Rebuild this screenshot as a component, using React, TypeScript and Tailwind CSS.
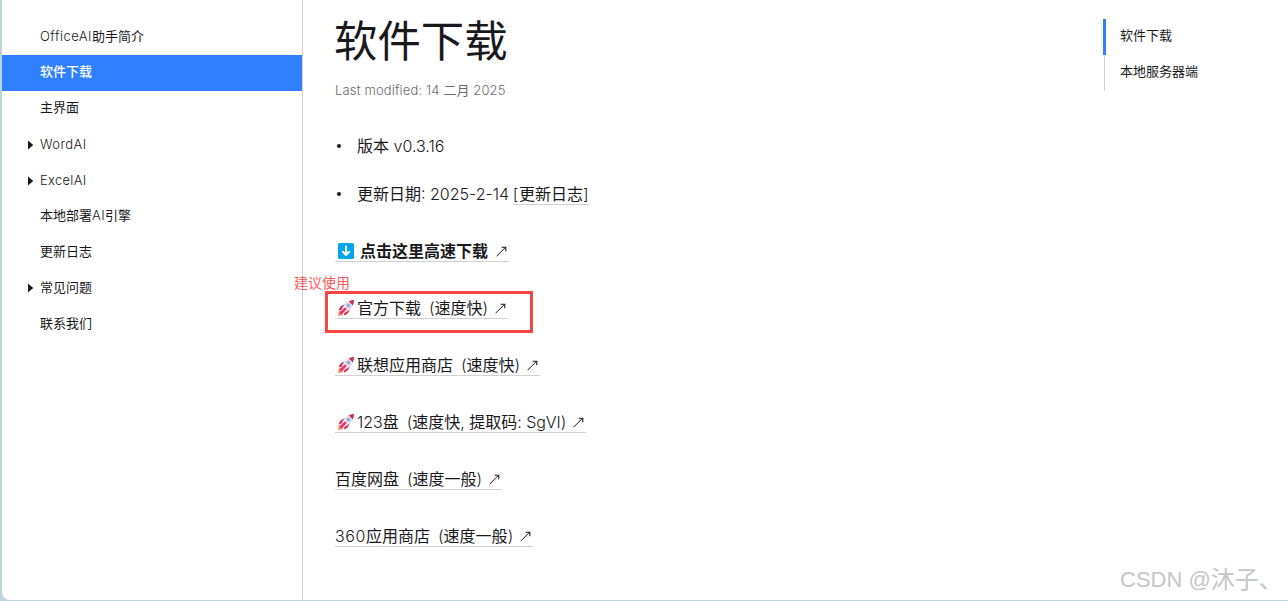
import { clsx } from 'clsx'

type NavItem = { label: string; active?: boolean; nested?: boolean; className?: string }
type Download = { label: string; note: string; rocket?: boolean; className?: string; noteClass?: string }

const navItems: NavItem[] = [
  { label: 'OfficeAI助手简介', className: 'tracking-[0.5px]' },
  { label: '软件下载', active: true, className: 'pb-0.5' },
  { label: '主界面', className: 'pb-0.5' },
  { label: 'WordAI', nested: true, className: 'tracking-[0.4px]' },
  { label: 'ExcelAI', nested: true, className: 'tracking-[0.3px]' },
  { label: '本地部署AI引擎', className: 'pb-0.5 tracking-[0.4px]' },
  { label: '更新日志', className: 'pb-0.5' },
  { label: '常见问题', nested: true, className: 'pb-0.5' },
  { label: '联系我们', className: 'pb-0.5' },
]

const downloads: Download[] = [
  { label: '官方下载', note: '(速度快)', rocket: true },
  { label: '联想应用商店', note: '(速度快)', rocket: true },
  { label: '123盘', note: '(速度快, 提取码: SgVI)', rocket: true, noteClass: 'tracking-[-0.06px]' },
  { label: '百度网盘', note: '(速度一般)' },
  { label: '360应用商店', note: '(速度一般)', className: 'tracking-[0.6px]', noteClass: 'tracking-normal' },
]

// Latin runs are set lighter than the Chinese text around them
function Mixed({ text, latin }: { text: string; latin?: string }) {
  return (
    <span className="whitespace-pre">
      {text.split(/([\x20-\x7e]+)/).map((part, i) =>
        i % 2 ? (
          <span key={i} className={clsx('font-light', latin)}>
            {part}
          </span>
        ) : (
          <span key={i} className="tracking-normal">
            {part}
          </span>
        ),
      )}
    </span>
  )
}

function Rocket() {
  return (
    <svg width="18" height="18" viewBox="0 0 18 18" className="mt-px ml-0.5 mr-0.5 shrink-0">
      <path d="M1 17 L1.8 12.4 L3.6 11.8 L6.2 14.6 L5.4 16.2 Z" fill="#ff8257" />
      <path d="M8 5.6 C5 5.8 3 7.5 1.6 11.4 L5.5 10.4 Z M12.6 10 C12.4 13 10.6 15.2 6.8 16.6 L7.8 12.5 Z" fill="#d2264f" />
      <path d="M4.4 11.2 C6 6 10 1.8 17 1 C16.4 7.8 12.2 12 7 14 Z" fill="#efeaf5" stroke="#b9a9c2" strokeWidth=".4" />
      <path d="M11.8 2.4 C13.4 1.5 15.2 1.1 17 1 C16.9 2.9 16.5 4.6 15.7 6.2 Z" fill="#d2264f" />
      <path d="M4.2 13.8 L8.2 9.9" stroke="#f0325f" strokeWidth="2.6" strokeLinecap="round" />
      <circle cx="11.4" cy="6.6" r="1.7" fill="#7cbcec" stroke="#9c90b0" strokeWidth=".6" />
    </svg>
  )
}

function DownBadge() {
  return (
    <svg width="16" height="16" viewBox="0 0 16 16" className="mt-px ml-[3px] mr-1.5 shrink-0">
      <rect width="16" height="16" rx="1.5" fill="#00a6ed" />
      <path d="M8 3.5 V11" fill="none" stroke="#fff" strokeWidth="2" strokeLinecap="round" />
      <path d="M4.8 8.8 L8 12 L11.2 8.8" fill="none" stroke="#fff" strokeWidth="2" strokeLinecap="round" strokeLinejoin="round" />
    </svg>
  )
}

function External() {
  return (
    <svg width="11" height="11" viewBox="0 0 11 11" className="mt-px ml-[7px] mr-0.5 shrink-0">
      <path d="M.6 10.2 L9.4 1.4" fill="none" stroke="#19191c" strokeWidth="1" />
      <path d="M5.6 1.2 H9.8 V5.2" fill="none" stroke="#19191c" strokeWidth="1.1" />
    </svg>
  )
}

function Sidebar() {
  return (
    <nav className="w-[301px] shrink-0 border-r border-[#d1d1d2] pt-[19px] text-[13px]">
      {navItems.map((item) => (
        <a
          key={item.label}
          className={clsx(
            'flex h-9 items-center pl-[26px]',
            item.active && 'bg-[#307fff] font-medium text-white',
            item.className,
          )}
        >
          <span className="w-3">
            {item.nested && (
              <svg width="6" height="10" viewBox="0 0 6 10">
                <path d="M0 .5 L5.2 5 L0 9.5 Z" fill="#19191c" />
              </svg>
            )}
          </span>
          <Mixed text={item.label} />
        </a>
      ))}
    </nav>
  )
}

function Outline() {
  return (
    <aside className="mt-[19px] mr-[42px] w-[143px] shrink-0 text-[13px]">
      <a className="flex h-9 items-center border-l-[3px] border-[#307fff] pb-0.5 pl-3.5">软件下载</a>
      <a className="ml-px flex h-9 items-center border-l border-[#d1d1d2] pb-0.5 pl-[15px]">本地服务器端</a>
    </aside>
  )
}

export default function App() {
  return (
    <div className="h-[601px] bg-[#bdd4db] pb-px pl-0.5 font-['Inter','Noto_Sans_CJK_SC',sans-serif] font-normal text-[#19191c]">
      <div className="relative flex h-[600px] overflow-hidden rounded-bl-lg bg-white">
        <Sidebar />

        <main className="flex-1 pl-8">
          <h1 className="-ml-px mt-[9px] h-[65px] text-[43.4px] leading-[64px]">软件下载</h1>
          <p className="mt-[6px] h-5 text-[13px] leading-5 tracking-[0.15px] text-[#6b6b6e]">
            <Mixed text="Last modified: 14 二月 2025" />
          </p>

          <ul className="mt-[34px] flex flex-col gap-6 text-[16px] leading-6">
            <li className="flex h-6 items-center">
              <span className="mr-4 ml-0.5 size-1 rounded-full bg-[#19191c]" />
              <Mixed text="版本 v0.3.16" />
            </li>
            <li className="flex h-6 items-center">
              <span className="mr-4 ml-0.5 size-1 rounded-full bg-[#19191c]" />
              <Mixed text="更新日期: 2025-2-14 " />
              <a className="-ml-px flex h-[22px] border-b border-[#d1d1d2] leading-[22px] tracking-[0.8px]">
                <Mixed text="[更新日志]" />
              </a>
            </li>
          </ul>

          <div className="mt-[34px] flex flex-col items-start gap-[35px] text-[16px] leading-[21px] whitespace-nowrap">
            <a className="flex h-[22px] items-center border-b border-[#d1d1d2] font-bold">
              <DownBadge />
              <span className="pt-0.5 pr-px">点击这里高速下载</span>
              <External />
            </a>
            {downloads.map((d) => (
              <a key={d.label} className={clsx('flex h-[22px] items-center border-b border-[#d1d1d2]', d.className)}>
                {d.rocket && <Rocket />}
                <span className="pt-0.5">
                  <Mixed text={d.label} />
                </span>
                <span className={clsx('ml-2 pt-0.5', d.noteClass)}>
                  <Mixed text={d.note} />
                </span>
                <External />
              </a>
            ))}
          </div>
        </main>

        <Outline />

        {/* hand-drawn annotation over the page */}
        <span className="absolute top-[273px] left-[292px] text-[14px] leading-5 text-[#ff5a5a]">建议使用</span>
        <div className="absolute top-[291px] left-[323px] h-[42px] w-[208px] border-[3px] border-[#fb4444]" />

        <div className="absolute top-[564px] left-[1118px] flex items-center font-['Liberation_Sans','Noto_Sans_CJK_SC',sans-serif] text-[22px] leading-8 whitespace-pre text-[#c6c6c6]">
          <span>CSDN @</span>
          <span className="w-[60px] overflow-visible text-[24px]">沐子、</span>
        </div>
      </div>
    </div>
  )
}
